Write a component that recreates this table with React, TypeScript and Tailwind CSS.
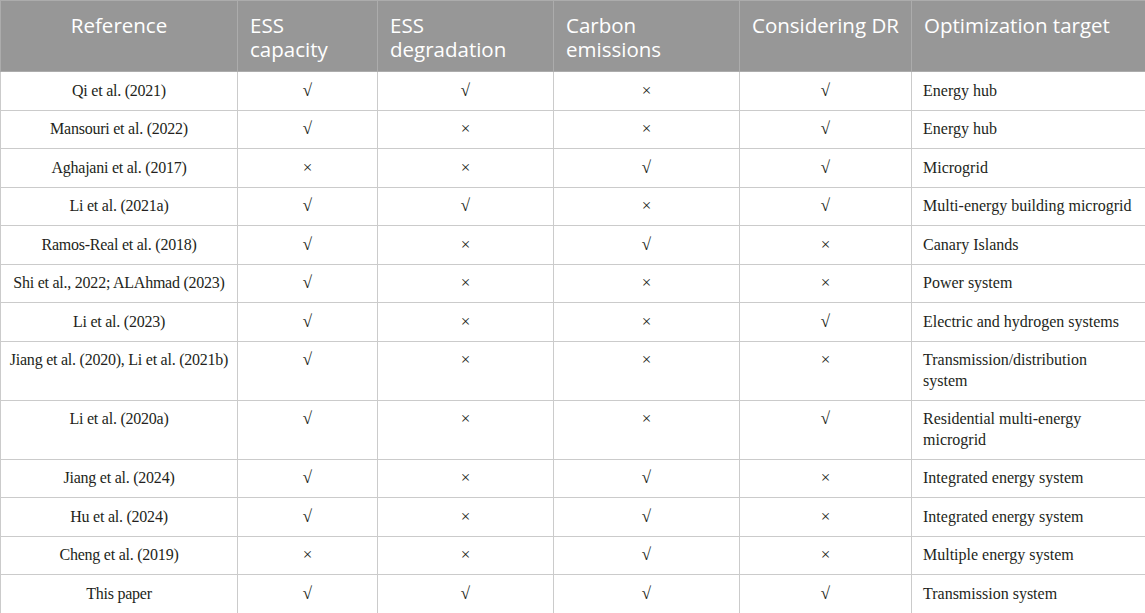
const headers = [
    { label: "Reference", align: "text-center" },
    { label: "ESS capacity", align: "text-left" },
    { label: "ESS degradation", align: "text-left" },
    { label: "Carbon emissions", align: "text-left" },
    { label: "Considering DR", align: "text-left" },
    { label: "Optimization target", align: "text-left" },
];

const colWidths = ["w-[237px]", "w-[140px]", "w-[176px]", "w-[186px]", "w-[172px]", "w-[234px]"];

const Y = "√";
const N = "×";

const rows: string[][] = [
    ["Qi et al. (2021)", Y, Y, N, Y, "Energy hub"],
    ["Mansouri et al. (2022)", Y, N, N, Y, "Energy hub"],
    ["Aghajani et al. (2017)", N, N, Y, Y, "Microgrid"],
    ["Li et al. (2021a)", Y, Y, N, Y, "Multi-energy building microgrid"],
    ["Ramos-Real et al. (2018)", Y, N, Y, N, "Canary Islands"],
    ["Shi et al., 2022; ALAhmad (2023)", Y, N, N, N, "Power system"],
    ["Li et al. (2023)", Y, N, N, Y, "Electric and hydrogen systems"],
    ["Jiang et al. (2020), Li et al. (2021b)", Y, N, N, N, "Transmission/distribution system"],
    ["Li et al. (2020a)", Y, N, N, Y, "Residential multi-energy microgrid"],
    ["Jiang et al. (2024)", Y, N, Y, N, "Integrated energy system"],
    ["Hu et al. (2024)", Y, N, Y, N, "Integrated energy system"],
    ["Cheng et al. (2019)", N, N, Y, N, "Multiple energy system"],
    ["This paper", Y, Y, Y, Y, "Transmission system"],
];

function cellClass(i: number) {
    if (i === 0) return "text-center text-[16px] px-[5px] tracking-[-0.015em] whitespace-nowrap";
    if (i < 5) return "text-center text-[17px] px-[11px]";
    return "text-left text-[16px] px-[11px]";
}

export default function App() {
    return (
        <div className="w-[1145px] h-[613px] bg-white overflow-hidden">
            <table className="table-fixed border-collapse w-[1145px]">
                <colgroup>
                    {colWidths.map((w) => (
                        <col key={w} className={w} />
                    ))}
                </colgroup>
                <thead>
                    <tr className="bg-[#979797] h-[71px]">
                        {headers.map((h) => (
                            <th
                                key={h.label}
                                className={`${h.align} align-top font-normal text-white text-[20.5px] leading-[24px] pt-[12px] pb-[10px] px-[12px] border border-[#acacac] font-['Open_Sans',sans-serif]`}
                            >
                                {h.label}
                            </th>
                        ))}
                    </tr>
                </thead>
                <tbody>
                    {rows.map((row) => (
                        <tr key={row[0]}>
                            {row.map((cell, i) => (
                                <td
                                    key={i}
                                    className={`${cellClass(i)} align-top text-[#231f20] leading-[20.5px] py-[8.5px] border border-[#cbcbcb] font-['Liberation_Serif',serif]`}
                                >
                                    {cell}
                                </td>
                            ))}
                        </tr>
                    ))}
                </tbody>
            </table>
        </div>
    );
}
